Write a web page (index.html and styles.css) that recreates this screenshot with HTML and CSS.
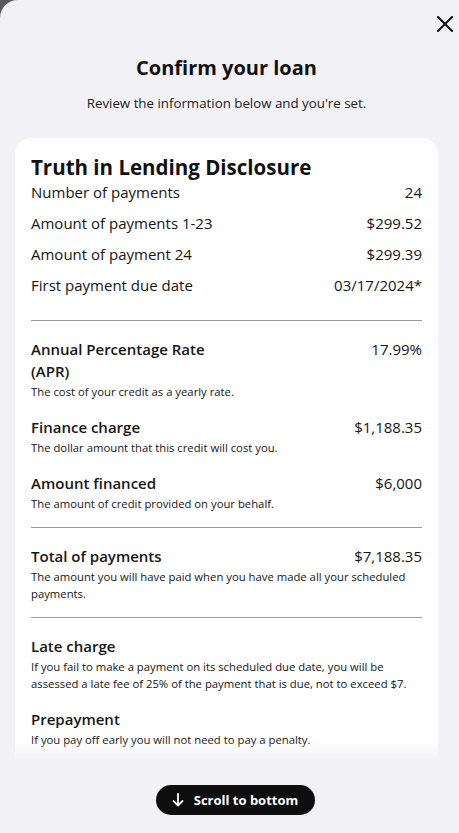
FILE: index.html
```html
<!DOCTYPE html>
<html lang="en">
<head>
<meta charset="utf-8">
<title>Confirm your loan</title>
<link rel="stylesheet" href="styles.css">
</head>
<body>
<div class="modal">
  <div class="modal-header">
    <button class="close-btn" aria-label="Close">
      <svg width="16" height="16" viewBox="0 0 16 16"><path d="M1 1 L15 15 M15 1 L1 15" stroke="#111" stroke-width="2" fill="none" stroke-linecap="square"/></svg>
    </button>
  </div>
  <h1 class="title">Confirm your loan</h1>
  <p class="subtitle">Review the information below and you're set.</p>

  <div class="card">
    <div class="card-scroll">
      <h2 class="card-title">Truth in Lending Disclosure</h2>
      <div class="row"><span>Number of payments</span><span>24</span></div>
      <div class="row"><span>Amount of payments 1-23</span><span>$299.52</span></div>
      <div class="row"><span>Amount of payment 24</span><span>$299.39</span></div>
      <div class="row"><span>First payment due date</span><span>03/17/2024*</span></div>

      <hr class="divider first">

      <div class="item">
        <div class="item-head"><span class="item-label narrow">Annual Percentage Rate (APR)</span><span class="item-value">17.99%</span></div>
        <p class="item-desc">The cost of your credit as a yearly rate.</p>
      </div>
      <div class="item">
        <div class="item-head"><span class="item-label">Finance charge</span><span class="item-value">$1,188.35</span></div>
        <p class="item-desc">The dollar amount that this credit will cost you.</p>
      </div>
      <div class="item">
        <div class="item-head"><span class="item-label">Amount financed</span><span class="item-value">$6,000</span></div>
        <p class="item-desc">The amount of credit provided on your behalf.</p>
      </div>

      <hr class="divider">

      <div class="item">
        <div class="item-head"><span class="item-label">Total of payments</span><span class="item-value">$7,188.35</span></div>
        <p class="item-desc">The amount you will have paid when you have made all your scheduled payments.</p>
      </div>

      <hr class="divider">

      <div class="item">
        <div class="item-head"><span class="item-label">Late charge</span></div>
        <p class="item-desc">If you fail to make a payment on its scheduled due date, you will be assessed a late fee of 25% of the payment that is due, not to exceed $7.</p>
      </div>
      <div class="item">
        <div class="item-head"><span class="item-label">Prepayment</span></div>
        <p class="item-desc">If you pay off early you will not need to pay a penalty.</p>
      </div>
    </div>
    <div class="fade"></div>
  </div>

  <div class="button-row">
    <button class="scroll-btn">
      <svg width="12" height="14" viewBox="0 0 12 14"><path d="M6 1 V12.5 M1.5 8 L6 12.5 L10.5 8" stroke="#fff" stroke-width="1.8" fill="none" stroke-linecap="round" stroke-linejoin="round"/></svg>
      <span>Scroll to bottom</span>
    </button>
  </div>
</div>
</body>
</html>
```

FILE: styles.css
```css
* { box-sizing: border-box; }
html, body { margin: 0; padding: 0; }
body {
  background: #5a5a5c;
  font-family: "Open Sans", "Noto Sans", sans-serif;
  color: #161616;
}
.modal {
  background: #f2f1f6;
  border-top-left-radius: 18px;
  height: 833px;
  overflow: hidden;
  display: flex;
  flex-direction: column;
}
.modal-header {
  display: flex;
  justify-content: flex-end;
  padding: 16px 6px 0 0;
  height: 40px;
}
.close-btn {
  border: 0;
  background: transparent;
  padding: 0;
  width: 16px;
  height: 16px;
  display: flex;
}
.title {
  margin: 14px 21px 0 15px;
  text-align: center;
  font-size: 20px;
  line-height: 28px;
  font-weight: 700;
  color: #111;
}
.subtitle {
  margin: 11px 21px 0 15px;
  text-align: center;
  font-size: 13.3px;
  line-height: 20px;
  color: #222;
}
.card {
  position: relative;
  margin: 25px 21px 0 15px;
  height: 622px;
  background: #fff;
  border-radius: 16px 16px 0 0;
  overflow: hidden;
}
.card-scroll {
  padding: 16px 16px 0 16px;
}
.card-title {
  margin: 0;
  font-size: 20.5px;
  line-height: 26px;
  font-weight: 700;
  color: #111;
}
.row {
  display: flex;
  justify-content: space-between;
  font-size: 15px;
  line-height: 24px;
  margin-top: 7px;
}
.card-title + .row { margin-top: 0; }
.divider {
  border: 0;
  border-top: 1px solid #9a9a9a;
  margin: 15px 0 17px 0;
}
.divider.first { margin: 23px 0 17px 0; }
.item + .item { margin-top: 16px; }
.item-head {
  display: flex;
  justify-content: space-between;
  align-items: flex-start;
  font-size: 15px;
  line-height: 22px;
  padding-bottom: 1px;
}
.item-label { font-weight: 600; }
.item-label.narrow { max-width: 205px; }
.item-desc {
  margin: 0;
  font-size: 11.3px;
  line-height: 17px;
}
.fade {
  position: absolute;
  left: 0; right: 0; bottom: 0;
  height: 18px;
  background: linear-gradient(to bottom, rgba(242,241,246,0), #f2f1f6);
}
.button-row {
  display: flex;
  justify-content: center;
  padding-left: 12px;
  margin-top: 25px;
}
.scroll-btn {
  display: flex;
  align-items: center;
  gap: 10px;
  height: 30px;
  padding: 0 17px 0 16px;
  border: 0;
  border-radius: 15px;
  background: #0e0e0e;
  color: #fff;
  font-family: "Open Sans", "Noto Sans", sans-serif;
  font-size: 13px;
  font-weight: 700;
}
```
